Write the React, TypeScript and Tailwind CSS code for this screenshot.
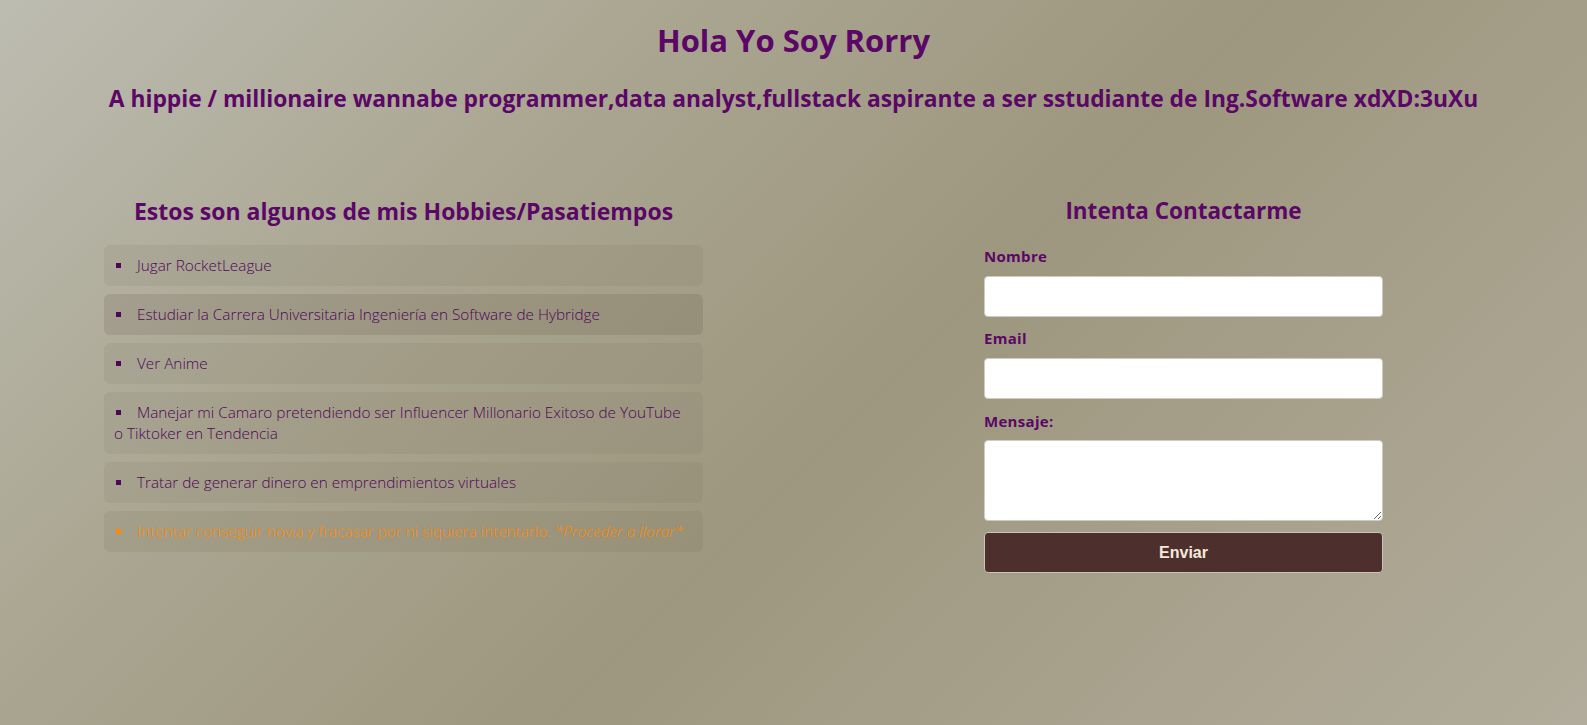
import React from 'react';

const hobbies = [
  'Jugar RocketLeague',
  'Estudiar la Carrera Universitaria Ingeniería en Software de Hybridge',
  'Ver Anime',
  'Manejar mi Camaro pretendiendo ser Influencer Millonario Exitoso de YouTube o Tiktoker en Tendencia',
  'Tratar de generar dinero en emprendimientos virtuales',
];

const Bullet = () => (
  <span className="inline-block w-[5px] h-[5px] bg-current align-middle mr-[16px] ml-[2px] -mt-[2px]" />
);

export default function App() {
  return (
    <div
      className="min-h-[725px] w-full bg-[linear-gradient(135deg,#bdbcb1_0%,#a9a590_30%,#9e977f_55%,#b1ac9b_100%)] text-[#5b0766]"
      style={{ fontFamily: '"Open Sans", "Noto Sans", sans-serif' }}
    >
      <header className="text-center">
        <h1 className="pt-[20px] text-[31px] leading-[40px] font-bold">Hola Yo Soy Rorry</h1>
        <h2 className="mt-[23px] text-[22.8px] leading-[32px] font-bold">
          A hippie / millionaire wannabe programmer,data analyst,fullstack aspirante a ser sstudiante de Ing.Software xdXD:3uXu
        </h2>
      </header>

      <main className="flex pl-[104px] mt-[81px]">
        <section className="w-[599px]">
          <h3 className="text-center text-[23px] leading-[30px] font-bold">Estos son algunos de mis Hobbies/Pasatiempos</h3>
          <ul className="mt-[19px] flex flex-col gap-[8px]">
            {hobbies.map((h, i) => (
              <li
                key={h}
                className={`rounded-[6px] px-[10px] py-[10px] text-[15.3px] leading-[21px] font-light text-[#4f0559] ${
                  i === 1 ? 'bg-[rgba(70,55,35,0.13)]' : 'bg-[rgba(70,55,35,0.06)]'
                }`}
              >
                <Bullet />
                {h}
              </li>
            ))}
            <li className="rounded-[6px] px-[10px] py-[10px] text-[15.3px] leading-[21px] font-light bg-[rgba(70,55,35,0.07)] text-[#ff8800]">
              <Bullet />
              Intentar conseguir novia y fracasar por ni siquiera intentarlo. <em>*Proceder a llorar*</em>
            </li>
          </ul>
        </section>

        <section className="ml-[281px] w-[399px]">
          <h3 className="text-center text-[22.5px] leading-[30px] font-bold">Intenta Contactarme</h3>
          <form className="mt-[20px] flex flex-col" onSubmit={(e) => e.preventDefault()}>
            <label className="text-[15px] leading-[20px] font-bold tracking-[0.3px]">Nombre</label>
            <input
              type="text"
              className="mt-[10px] h-[41px] rounded-[4px] border border-[#cfcbc2] bg-white px-2 outline-none"
            />
            <label className="mt-[11px] text-[15px] leading-[20px] font-bold tracking-[0.3px]">Email</label>
            <input
              type="email"
              className="mt-[10px] h-[41px] rounded-[4px] border border-[#cfcbc2] bg-white px-2 outline-none"
            />
            <label className="mt-[12px] text-[15px] leading-[20px] font-bold tracking-[0.3px]">Mensaje:</label>
            <textarea className="mt-[9px] h-[81px] rounded-[4px] border border-[#cfcbc2] bg-white px-2 outline-none" />
            <button
              type="submit"
              className="mt-[11px] h-[41px] rounded-[4px] border border-[#c9c3b8] bg-[#4d302e] text-[16px] font-bold text-[#f6e8dc]"
              style={{ fontFamily: '"Liberation Sans", Arial, sans-serif' }}
            >
              Enviar
            </button>
          </form>
        </section>
      </main>
    </div>
  );
}
